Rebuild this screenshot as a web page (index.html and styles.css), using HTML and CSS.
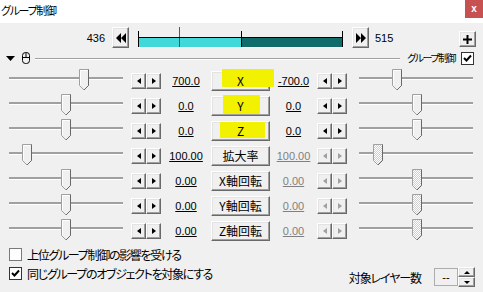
FILE: index.html
```html
<!DOCTYPE html>
<html lang="ja">
<head>
  <meta charset="UTF-8">
  <title>グループ制御</title>
  <link rel="stylesheet" href="styles.css">
</head>
<body>

  <svg class="defs" width="0" height="0">
    <defs>
      <pattern id="dots" width="2" height="2" patternUnits="userSpaceOnUse">
        <rect width="2" height="2" fill="#fff"/>
        <rect width="1" height="1" fill="#cfcfcf"/>
        <rect x="1" y="1" width="1" height="1" fill="#cfcfcf"/>
      </pattern>
      <symbol id="thumb" viewBox="0 0 10 22">
        <path d="M0.5 0.5H9.5V16.5L5 21L0.5 16.5Z" fill="#f0f0f0" stroke="#a0a0a0"/>
        <path d="M1.5 16V1.5H8.5" fill="none" stroke="#fff"/>
        <path d="M9.5 0.5V16.5L5 21" fill="none" stroke="#696969"/>
      </symbol>
      <symbol id="thumb-off" viewBox="0 0 10 22">
        <path d="M0.5 0.5H9.5V16.5L5 21L0.5 16.5Z" fill="url(#dots)" stroke="#a0a0a0"/>
        <path d="M9.5 0.5V16.5L5 21" fill="none" stroke="#696969"/>
      </symbol>
    </defs>
  </svg>

  <div class="window">
    <div class="titlebar">
      <span class="title">グループ制御</span>
      <span class="close">x</span>
    </div>

    <div class="timeline">
      <span class="frame-num start">436</span>
      <span class="btn jump">
        <svg width="10" height="10" viewBox="0 0 10 10"><path d="M5 0V10L0 5Z M10 0V10L5 5Z" fill="#000"/></svg>
      </span>
      <svg class="bar" width="206" height="21" viewBox="0 0 206 21">
        <rect x="1" y="11" width="103" height="9" fill="#40d8d8"/>
        <rect x="104" y="11" width="100" height="9" fill="#106b6b"/>
        <rect x="0" y="10" width="205" height="1" fill="#000"/>
        <rect x="0" y="4" width="1" height="16" fill="#000"/>
        <rect x="103" y="4" width="1" height="16" fill="#000"/>
        <rect x="204" y="4" width="1" height="16" fill="#000"/>
        <rect x="41" y="0" width="1" height="10" fill="#e02020"/>
        <rect x="41" y="11" width="1" height="9" fill="#1d5f5f"/>
        <rect x="1" y="20" width="204" height="1" fill="#fff"/>
      </svg>
      <span class="btn jump next">
        <svg width="10" height="10" viewBox="0 0 10 10"><path d="M0 0V10L5 5Z M5 0V10L10 5Z" fill="#000"/></svg>
      </span>
      <span class="frame-num end">515</span>
      <span class="btn add">
        <svg width="9" height="9" viewBox="0 0 9 9"><path d="M3.5 0H5.5V3.5H9V5.5H5.5V9H3.5V5.5H0V3.5H3.5Z" fill="#000"/></svg>
      </span>
    </div>

    <div class="head">
      <svg class="fold" width="9" height="5" viewBox="0 0 9 5"><path d="M0 0H9L4.5 5Z" fill="#000"/></svg>
      <svg class="mouse" width="8" height="12" viewBox="0 0 8 12">
        <rect x="0.5" y="0.5" width="7" height="11" rx="3" fill="none" stroke="#000"/>
        <path d="M0.5 5.5H7.5M4 0.5V5.5" stroke="#000" fill="none"/>
      </svg>
      <span class="rule"></span>
      <span class="group-label">グループ制御</span>
      <span class="box dark checked">
        <svg width="11" height="11" viewBox="0 0 11 11"><path d="M2 5L4.5 7.5L9 2.5" fill="none" stroke="#000" stroke-width="2"/></svg>
      </span>
    </div>

    <div class="tracks">
      <div class="track-row">
        <div class="slider"><svg class="thumb" style="left:70px"><use href="#thumb"/></svg></div>
        <div class="spin"><span class="btn dec"></span><span class="btn inc"></span></div>
        <span class="val">700.0</span>
        <span class="btn axis"><span class="mark mark-x"></span><span class="label">X</span></span>
        <span class="val end">-700.0</span>
        <div class="spin"><span class="btn dec"></span><span class="btn inc"></span></div>
        <div class="slider right"><svg class="thumb" style="left:33px"><use href="#thumb"/></svg></div>
      </div>

      <div class="track-row">
        <div class="slider"><svg class="thumb" style="left:52px"><use href="#thumb"/></svg></div>
        <div class="spin"><span class="btn dec"></span><span class="btn inc"></span></div>
        <span class="val">0.0</span>
        <span class="btn axis"><span class="mark mark-y"></span><span class="label">Y</span></span>
        <span class="val end">0.0</span>
        <div class="spin"><span class="btn dec"></span><span class="btn inc"></span></div>
        <div class="slider right"><svg class="thumb" style="left:53px"><use href="#thumb"/></svg></div>
      </div>

      <div class="track-row">
        <div class="slider"><svg class="thumb" style="left:52px"><use href="#thumb"/></svg></div>
        <div class="spin"><span class="btn dec"></span><span class="btn inc"></span></div>
        <span class="val">0.0</span>
        <span class="btn axis"><span class="mark mark-z"></span><span class="label">Z</span></span>
        <span class="val end">0.0</span>
        <div class="spin"><span class="btn dec"></span><span class="btn inc"></span></div>
        <div class="slider right"><svg class="thumb" style="left:53px"><use href="#thumb"/></svg></div>
      </div>

      <div class="track-row">
        <div class="slider"><svg class="thumb" style="left:13px"><use href="#thumb"/></svg></div>
        <div class="spin"><span class="btn dec"></span><span class="btn inc"></span></div>
        <span class="val">100.00</span>
        <span class="btn axis"><span class="label">拡大率</span></span>
        <span class="val end off">100.00</span>
        <div class="spin off"><span class="btn dec"></span><span class="btn inc"></span></div>
        <div class="slider right"><svg class="thumb" style="left:14px"><use href="#thumb-off"/></svg></div>
      </div>

      <div class="track-row">
        <div class="slider"><svg class="thumb" style="left:52px"><use href="#thumb"/></svg></div>
        <div class="spin"><span class="btn dec"></span><span class="btn inc"></span></div>
        <span class="val">0.00</span>
        <span class="btn axis"><span class="label">X軸回転</span></span>
        <span class="val end off">0.00</span>
        <div class="spin off"><span class="btn dec"></span><span class="btn inc"></span></div>
        <div class="slider right"><svg class="thumb" style="left:53px"><use href="#thumb-off"/></svg></div>
      </div>

      <div class="track-row">
        <div class="slider"><svg class="thumb" style="left:52px"><use href="#thumb"/></svg></div>
        <div class="spin"><span class="btn dec"></span><span class="btn inc"></span></div>
        <span class="val">0.00</span>
        <span class="btn axis"><span class="label">Y軸回転</span></span>
        <span class="val end off">0.00</span>
        <div class="spin off"><span class="btn dec"></span><span class="btn inc"></span></div>
        <div class="slider right"><svg class="thumb" style="left:53px"><use href="#thumb-off"/></svg></div>
      </div>

      <div class="track-row">
        <div class="slider"><svg class="thumb" style="left:52px"><use href="#thumb"/></svg></div>
        <div class="spin"><span class="btn dec"></span><span class="btn inc"></span></div>
        <span class="val">0.00</span>
        <span class="btn axis"><span class="label">Z軸回転</span></span>
        <span class="val end off">0.00</span>
        <div class="spin off"><span class="btn dec"></span><span class="btn inc"></span></div>
        <div class="slider right"><svg class="thumb" style="left:53px"><use href="#thumb-off"/></svg></div>
      </div>
    </div>

    <div class="options">
      <div class="checks">
        <label class="check-row"><span class="box"></span>上位グループ制御の影響を受ける</label>
        <label class="check-row">
          <span class="box dark checked">
            <svg width="11" height="11" viewBox="0 0 11 11"><path d="M2 5L4.5 7.5L9 2.5" fill="none" stroke="#000" stroke-width="2"/></svg>
          </span>同じグループのオブジェクトを対象にする
        </label>
      </div>
      <div class="count">
        <span class="count-label">対象レイヤー数</span>
        <span class="num-box">--</span>
        <div class="vspin"><span class="btn up"></span><span class="btn down"></span></div>
      </div>
    </div>
  </div>

</body>
</html>
```

FILE: styles.css
```css
body {
  margin: 0;
  background: #f0f0f0;
  font-family: 'Liberation Sans', 'Noto Sans CJK JP', sans-serif;
  font-size: 12px;
  color: #000;
  font-feature-settings: "palt";
}

.defs {
  position: absolute;
}

.window {
  width: 483px;
  height: 292px;
  overflow: hidden;
}

/* title bar */

.titlebar {
  display: flex;
  height: 23px;
  background: #fff;
}

.title {
  font-family: 'Noto Sans CJK JP', sans-serif;
  font-size: 11px;
  letter-spacing: -1.3px;
  line-height: 21px;
  padding-left: 1px;
}

.close {
  margin-left: auto;
  width: 18px;
  height: 18px;
  background: #c75050;
  color: #fff;
  font-size: 10px;
  font-weight: bold;
  text-align: center;
  line-height: 17px;
}

/* classic 3d button */

.btn {
  box-sizing: border-box;
  display: flex;
  align-items: center;
  justify-content: center;
  background: #f0f0f0;
  border: 1px solid;
  border-color: #fff #696969 #696969 #fff;
  box-shadow: inset -1px -1px #a0a0a0, inset 1px 1px #e3e3e3;
}

/* timeline */

.timeline {
  display: flex;
  height: 21px;
  margin-top: 4px;
}

.frame-num {
  font-size: 11px;
  line-height: 23px;
}

.frame-num.start {
  width: 105px;
  text-align: right;
}

.frame-num.end {
  margin-left: 6px;
}

.jump {
  width: 17px;
  height: 21px;
  margin-left: 7px;
}

.jump.next {
  margin-left: 8px;
}

.bar {
  margin-left: 9px;
}

.add {
  width: 17px;
  height: 16px;
  margin: 4px 7px 0 auto;
}

/* head */

.head {
  display: flex;
  align-items: center;
  height: 20px;
}

.fold {
  margin-left: 6px;
}

.mouse {
  margin-left: 7px;
}

.rule {
  flex: 1;
  margin: 1px 0 0 5px;
  border-top: 1px solid #a0a0a0;
  border-bottom: 1px solid #fff;
}

.group-label {
  margin-left: 7px;
  font-family: 'Noto Sans CJK JP', sans-serif;
  font-size: 10px;
  letter-spacing: -1.5px;
  line-height: 14px;
}

.head .box {
  margin: 0 9px 0 6px;
}

.box {
  box-sizing: border-box;
  display: flex;
  align-items: center;
  justify-content: center;
  width: 13px;
  height: 13px;
  background: #fff;
  border: 1px solid #7a7a7a;
}

.box.dark {
  border-color: #333;
}

/* track rows */

.track-row {
  display: flex;
  align-items: center;
  height: 25px;
}

.slider {
  position: relative;
  align-self: stretch;
  width: 114px;
  margin-left: 9px;
}

.slider.right {
  margin-left: 12px;
}

.slider::before {
  content: '';
  position: absolute;
  left: 0;
  right: 0;
  top: 9px;
  height: 2px;
  background: #a0a0a0;
  border-bottom: 1px solid #fff;
}

.thumb {
  position: absolute;
  top: 1px;
  width: 10px;
  height: 22px;
}

.spin {
  display: flex;
  margin-left: 8px;
}

.track-row .val.end + .spin {
  margin-left: 0;
}

.spin .btn {
  width: 15px;
  height: 16px;
}

.spin .btn::before {
  content: '';
  border-top: 3.5px solid transparent;
  border-bottom: 3.5px solid transparent;
}

.spin .dec::before {
  border-right: 4px solid #000;
}

.spin .inc::before {
  border-left: 4px solid #000;
}

.spin.off .dec::before {
  border-right-color: #a0a0a0;
}

.spin.off .inc::before {
  border-left-color: #a0a0a0;
}

.val {
  width: 50px;
  font-size: 11px;
  text-align: center;
  text-decoration: underline;
  line-height: 14px;
  padding-top: 1px;
}

.val.end {
  width: 47px;
}

.val.off {
  color: #808080;
}

.axis {
  position: relative;
  width: 59px;
  height: 20px;
  font-family: 'Noto Sans CJK JP', sans-serif;
  font-size: 12px;
  line-height: 16px;
}

.axis .label {
  position: relative;
}

.mark {
  position: absolute;
  background: #f2f200;
  border-radius: 1px;
}

.mark-x {
  left: 10px;
  top: -3px;
  width: 52px;
  height: 18px;
}

.mark-y {
  left: 11px;
  top: -2px;
  width: 37px;
  height: 19px;
}

.mark-z {
  left: 8px;
  top: 0;
  width: 45px;
  height: 16px;
}

/* bottom options */

.options {
  display: flex;
  padding: 5px 8px 0 9px;
}

.checks {
  display: flex;
  flex-direction: column;
  gap: 6px;
}

.check-row {
  display: flex;
  align-items: center;
  gap: 5px;
  height: 13px;
  font-family: 'Noto Sans CJK JP', sans-serif;
  font-size: 12px;
  letter-spacing: -1.3px;
  line-height: 13px;
}

.count {
  display: flex;
  align-items: center;
  margin: 19px 0 0 auto;
}

.count-label {
  margin: 1px 13px 0 0;
  font-family: 'Noto Sans CJK JP', sans-serif;
  font-size: 12px;
  letter-spacing: -1.1px;
  line-height: 16px;
}

.num-box {
  box-sizing: border-box;
  width: 24px;
  height: 18px;
  border: 1px solid #adadad;
  font-size: 11px;
  line-height: 16px;
  text-align: center;
}

.vspin {
  display: flex;
  flex-direction: column;
}

.vspin .btn {
  width: 17px;
  height: 10px;
}

.vspin .btn::before {
  content: '';
  border-left: 3px solid transparent;
  border-right: 3px solid transparent;
}

.vspin .up::before {
  border-bottom: 3px solid #000;
}

.vspin .down::before {
  border-top: 3px solid #000;
}
```
